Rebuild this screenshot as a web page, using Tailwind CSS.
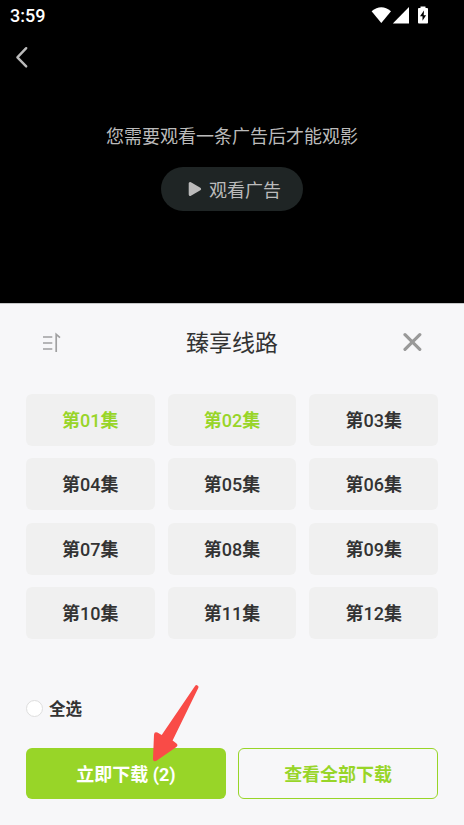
<!DOCTYPE html>
<html lang="zh-CN">
<head>
<meta charset="utf-8">
<title>臻享线路</title>
<script src="https://cdn.jsdelivr.net/npm/@tailwindcss/browser@4"></script>
</head>
<body class="bg-black">
<div class="relative flex h-[825px] w-[464px] flex-col overflow-hidden bg-black font-[Roboto,'Noto_Sans_CJK_SC',sans-serif]">
  <!-- Player -->
  <section class="flex h-[303px] shrink-0 flex-col">
    <header class="flex h-8 items-center justify-between pl-[10px] pr-[35px]">
      <span class="text-[18px] font-medium leading-8 text-white">3:59</span>
      <svg class="h-8 w-[58px]" viewBox="371 0 58 32" fill="#fff">
        <path d="M381.3 23 371.6 11.3Q381.3 3.3 391 11.3Z"/>
        <path d="M409 7V23.5H392.8Z"/>
        <path fill-rule="evenodd" d="M420.5 8V6.6h5V8h1.6q.9 0 .9.9v13.6q0 .9-.9.9h-8.2q-.9 0-.9-.9V8.9q0-.9.9-.9ZM424 10.6 420 16.2h2.5v4.6l3.6-5.6h-2.4Z"/>
      </svg>
    </header>
    <nav class="flex h-[50px] items-center pl-[14px]">
      <svg class="h-6 w-4" viewBox="0 0 16 24" fill="none" stroke="#bbb" stroke-width="2.4" stroke-linecap="round" stroke-linejoin="round"><path d="M12.2 3.2 3.4 12.4 12.2 21.4"/></svg>
    </nav>
    <div class="mt-[41px] flex flex-col items-center text-[18px] text-[#bbb]">
      <p class="leading-7">您需要观看一条广告后才能观影</p>
      <button class="mt-[16px] flex h-11 w-[142px] items-center rounded-full bg-[#1f2525] pl-[27px]">
        <svg class="mr-[7px] h-4 w-[14px]" viewBox="0 0 14 16" fill="#bbb" stroke="#bbb" stroke-width="3" stroke-linejoin="round"><path d="M2.2 2.6v10.8L11.6 8Z"/></svg>
        <span class="pt-0.5">观看广告</span>
      </button>
    </div>
  </section>
  <!-- Download sheet -->
  <section class="flex flex-1 flex-col border-t border-[#c5c6c7] bg-[#f7f7f9] px-[26px] text-[#333]">
    <header class="flex h-[78px] items-center justify-between px-[16px]">
      <svg class="mb-px h-[22px] w-5" viewBox="0 0 20 22" fill="none" stroke="#a0a0a1" stroke-width="1.7"><path d="M1 5H10.3M1 11H10.3M1 17H10.3"/><path d="M14.2 20V2.4L18 5.6"/></svg>
      <h1 class="pt-0.5 text-[23px] font-normal leading-8">臻享线路</h1>
      <svg class="mb-0.5 h-5 w-5" viewBox="0 0 20 20" fill="none" stroke="#999" stroke-width="3.2" stroke-linecap="round"><path d="M3 2.7 17.8 17.3M17.8 2.7 3 17.3"/></svg>
    </header>
    <div class="mt-3 grid grid-cols-3 gap-x-[13px] gap-y-[12.9px] text-[18px] font-bold *:flex *:h-[51.6px] *:items-center *:justify-center *:rounded-md *:bg-[#f0f0f0] *:pt-px">
      <button class="text-[#98d528]">第<span class="font-medium">01</span>集</button>
      <button class="text-[#98d528]">第<span class="font-medium">02</span>集</button>
      <button>第<span class="font-medium">03</span>集</button>
      <button>第<span class="font-medium">04</span>集</button>
      <button>第<span class="font-medium">05</span>集</button>
      <button>第<span class="font-medium">06</span>集</button>
      <button>第<span class="font-medium">07</span>集</button>
      <button>第<span class="font-medium">08</span>集</button>
      <button>第<span class="font-medium">09</span>集</button>
      <button>第<span class="font-medium">10</span>集</button>
      <button>第<span class="font-medium">11</span>集</button>
      <button>第<span class="font-medium">12</span>集</button>
    </div>
    <label class="mt-[57.9px] flex h-6 items-center gap-[6px] text-[16.5px] font-bold">
      <span class="mb-px size-[17px] rounded-full border border-[#dedede] bg-white"></span>
      <span class="pt-[3px]">全选</span>
    </label>
    <footer class="mt-[27px] grid grid-cols-2 gap-[12.5px] text-[18px] font-bold">
      <button class="h-[51px] rounded-md bg-[#98d528] pt-0.5 text-white">立即下载 (2)</button>
      <button class="h-[51px] rounded-md border border-[#98d528] pt-0.5 text-[#98d528]">查看全部下载</button>
    </footer>
  </section>
  <!-- Pointer over the download button -->
  <svg class="absolute left-[140px] top-[675px] h-[95px] w-[70px]" viewBox="0 0 70 95" fill="#f94b47"><path d="M55.2 10.8Q56.1 9.6 57.5 10.5 59 11.4 58.4 12.8L32.6 65.5 36.2 68.3Q38.8 70.2 36 72.2L16.5 85.8Q12.8 87.4 13 83.2L14 59.7Q14.3 56.4 17.4 57.6L21.7 60Z"/></svg>
</div>
</body>
</html>
